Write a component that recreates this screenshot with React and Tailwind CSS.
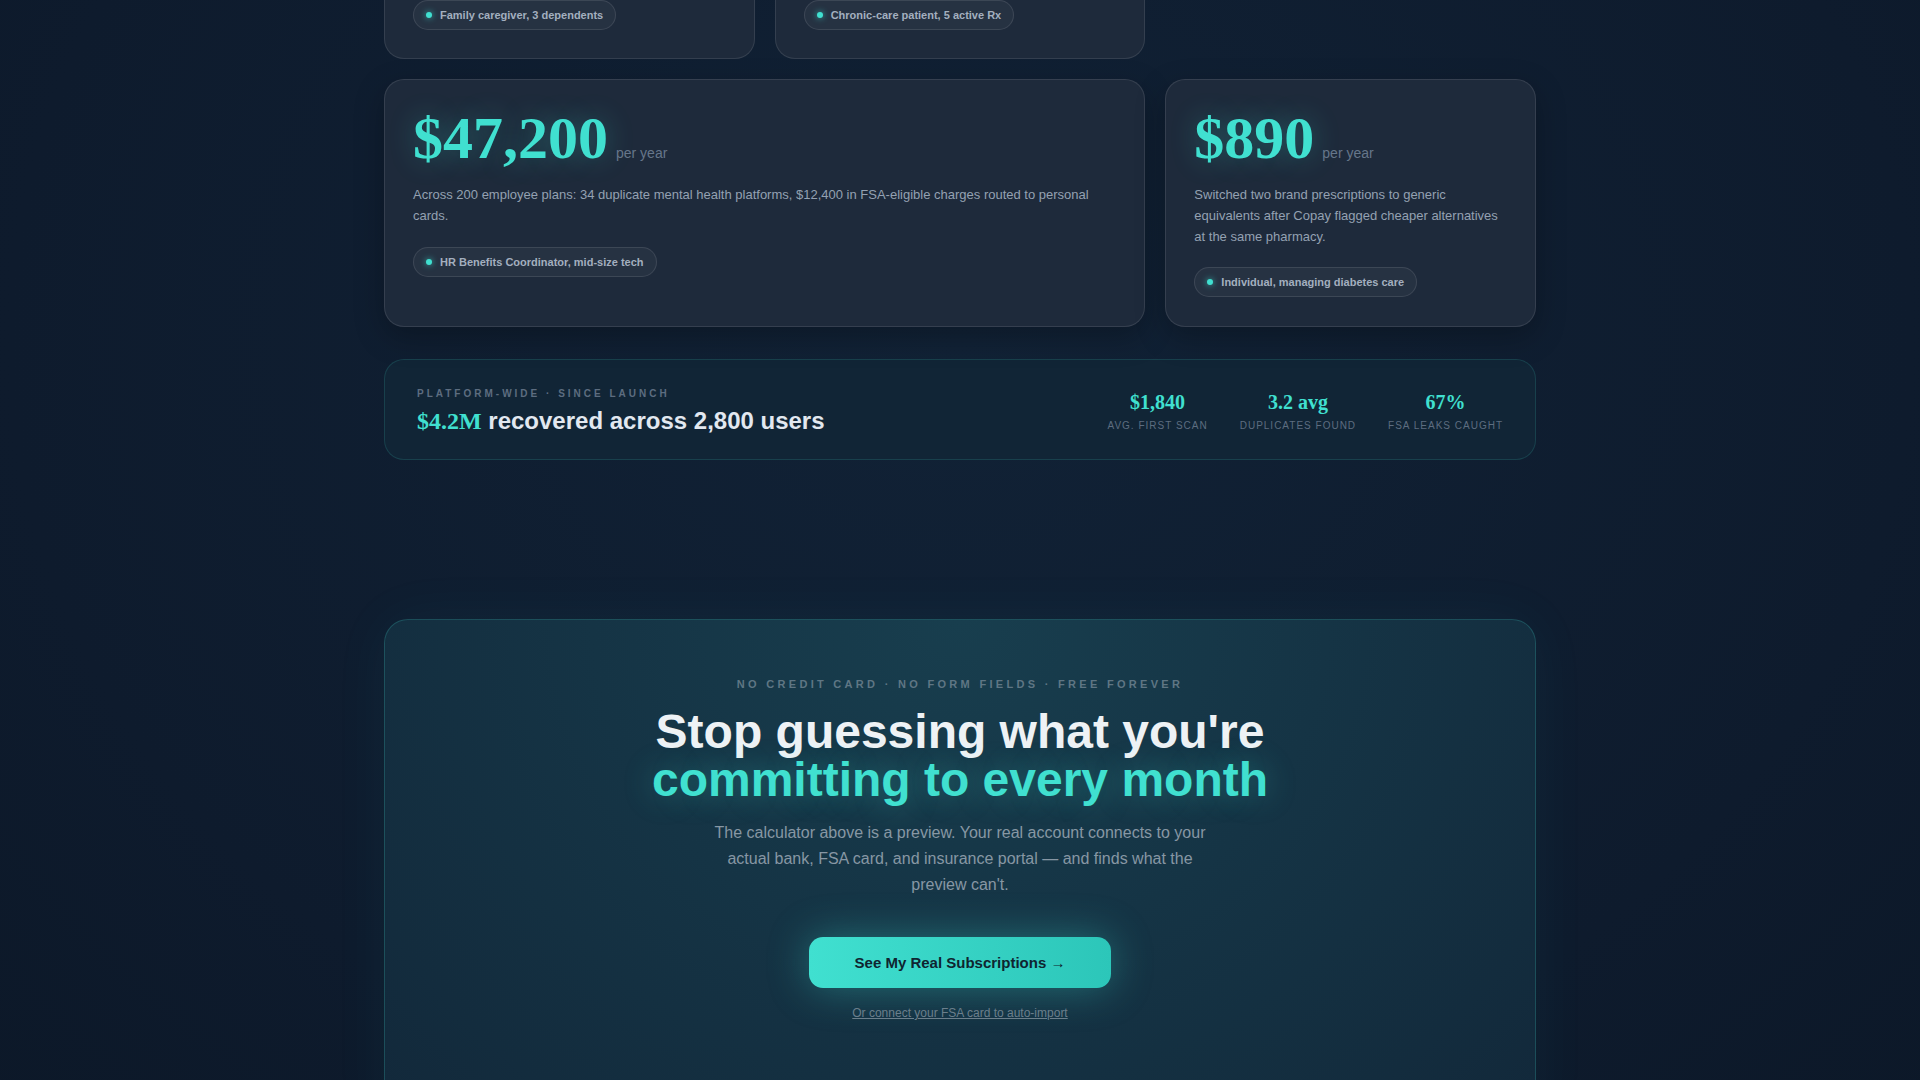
const sans = "font-['Liberation_Sans',Arial,sans-serif]";
const serif = "font-['Liberation_Serif','Times_New_Roman',serif]";

function Tag({ children }) {
  return (
    <span className="inline-flex items-center gap-2 rounded-full border border-white/10 bg-white/[0.04] px-3 py-1.5 text-[11px] font-bold leading-4 text-[#a3afbf]">
      <span className="h-1.5 w-1.5 rounded-full bg-[#40e0d0] shadow-[0_0_6px_rgba(64,224,208,0.8)]" />
      {children}
    </span>
  );
}

function StoryCard({ amount, text, tag, className = "" }) {
  return (
    <div className={`rounded-[20px] border border-white/10 bg-[#1e2a3b] px-7 pb-[29px] pt-7 shadow-[0_10px_30px_rgba(0,0,0,0.25)] ${className}`}>
      <div className="flex items-baseline gap-2">
        <span className={`${serif} text-[60px] font-bold leading-none text-[#40e0d0] [text-shadow:0_0_28px_rgba(64,224,208,0.3)]`}>
          {amount}
        </span>
        <span className="text-sm text-[#66768a]">per year</span>
      </div>
      <p className="mt-[17px] text-[13px] leading-[1.6] text-[#94a1b2]">{text}</p>
      <div className="mt-5">
        <Tag>{tag}</Tag>
      </div>
    </div>
  );
}

function Stat({ value, label }) {
  return (
    <div className="flex flex-col items-center gap-1">
      <span className={`${serif} text-[20px] font-bold leading-6 text-[#40e0d0]`}>{value}</span>
      <span className="text-[10px] uppercase leading-4 tracking-[0.1em] text-[#5d6d80]">{label}</span>
    </div>
  );
}

export default function App() {
  return (
    <div className={`${sans} min-h-screen overflow-hidden bg-[#0f1d30] bg-[radial-gradient(ellipse_at_50%_30%,#112236_0%,#0e1b2d_70%,#0c1828_100%)]`}>
      <div className="mx-auto w-[1152px]">
        {/* testimonial grid */}
        <div className="grid grid-cols-3 gap-5">
          <div className="rounded-b-[20px] border-x border-b border-white/10 bg-[#1e2a3b] px-7 pb-7">
            <Tag>Family caregiver, 3 dependents</Tag>
          </div>
          <div className="rounded-b-[20px] border-x border-b border-white/10 bg-[#1e2a3b] px-7 pb-7">
            <Tag>Chronic-care patient, 5 active Rx</Tag>
          </div>
          <div />
          <StoryCard
            className="col-span-2"
            amount="$47,200"
            text="Across 200 employee plans: 34 duplicate mental health platforms, $12,400 in FSA-eligible charges routed to personal cards."
            tag="HR Benefits Coordinator, mid-size tech"
          />
          <StoryCard
            amount="$890"
            text="Switched two brand prescriptions to generic equivalents after Copay flagged cheaper alternatives at the same pharmacy."
            tag="Individual, managing diabetes care"
          />
        </div>

        {/* platform stats */}
        <div className="mt-8 flex h-[101px] items-center justify-between rounded-[20px] border border-[#40e0d0]/15 bg-[#112536] px-8 pt-[4px]">
          <div>
            <div className="text-[10px] font-bold uppercase leading-4 tracking-[0.3em] text-[#5d6d80]">
              Platform-wide · Since launch
            </div>
            <div className="mt-[3px] text-2xl font-bold leading-8 text-[#e2e8f0]">
              <span className={`${serif} text-[#40e0d0]`}>$4.2M</span> recovered across 2,800 users
            </div>
          </div>
          <div className="flex gap-8">
            <Stat value="$1,840" label="Avg. first scan" />
            <Stat value="3.2 avg" label="Duplicates found" />
            <Stat value="67%" label="FSA leaks caught" />
          </div>
        </div>

        {/* CTA */}
        <div className="mt-[159px] flex h-[520px] flex-col items-center rounded-[24px] border border-[#40e0d0]/20 bg-[radial-gradient(ellipse_at_50%_0%,#183e4e_0%,#153445_45%,#12283a_100%)] pt-[56px] text-center shadow-[0_0_60px_rgba(64,224,208,0.05)]">
          <div className="text-[11px] font-bold uppercase leading-4 tracking-[0.3em] text-[#5f7684]">
            No credit card · No form fields · Free forever
          </div>
          <h2 className="mt-4 text-[48px] font-bold leading-[48px] text-[#eef2f5]">
            Stop guessing what you're
            <br />
            <span className="text-[#40e0d0] [text-shadow:0_0_30px_rgba(64,224,208,0.35)]">committing to every month</span>
          </h2>
          <p className="mt-4 max-w-[510px] text-base leading-[1.6] text-[#8797a4]">
            The calculator above is a preview. Your real account connects to your actual bank, FSA card, and insurance
            portal — and finds what the preview can't.
          </p>
          <button className="mt-10 rounded-[14px] bg-gradient-to-r from-[#40e0d0] to-[#2cc6b9] px-[46px] py-4 text-[15px] font-bold leading-[19px] text-[#0f2530] shadow-[0_0_40px_rgba(64,224,208,0.35)]">
            See My Real Subscriptions →
          </button>
          <a href="#" className="mt-4 text-xs leading-[18px] text-[#6b7f8c] underline">
            Or connect your FSA card to auto-import
          </a>
        </div>
      </div>
    </div>
  );
}
